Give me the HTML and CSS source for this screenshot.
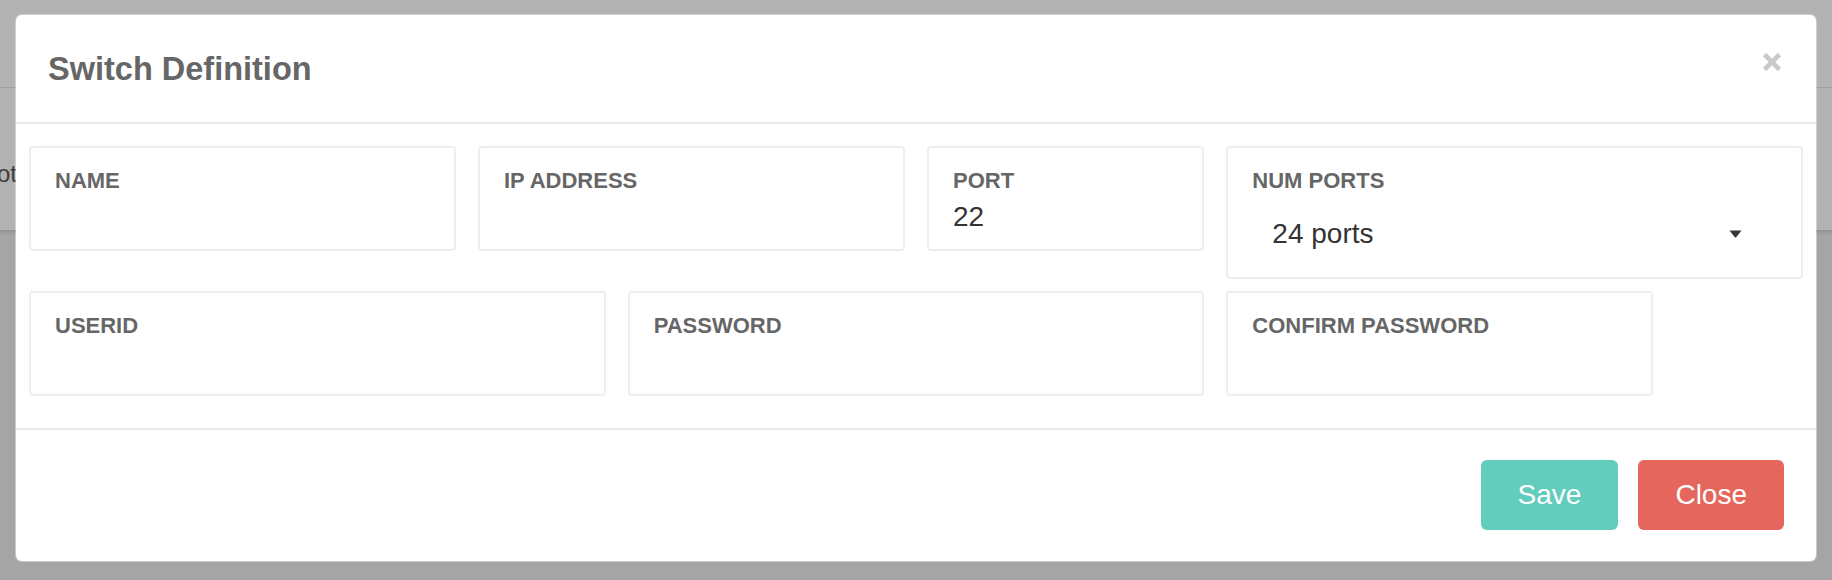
FILE: index.html
```html
<!DOCTYPE html>
<html lang="en">
<head>
<meta charset="utf-8">
<title>Switch Definition</title>
<link rel="stylesheet" href="styles.css">
</head>
<body>
  <div class="page">
    <div class="page-header"></div>
    <div class="page-panel"><span class="page-text">ot</span></div>
  </div>

  <div class="modal" role="dialog" aria-labelledby="modal-title">
    <div class="modal-header">
      <h4 class="modal-title" id="modal-title">Switch Definition</h4>
      <button class="close-btn" type="button" aria-label="Close">
        <svg width="20" height="20" viewBox="0 0 20 20" aria-hidden="true">
          <path d="M2.5 2.5 L17.5 17.5 M17.5 2.5 L2.5 17.5" stroke="#c9c9c9" stroke-width="4.6" fill="none"/>
        </svg>
      </button>
    </div>

    <div class="modal-body">
      <div class="form-grid">
        <div class="field span-3">
          <label class="field-label" for="f-name">NAME</label>
          <input class="field-input" id="f-name" type="text">
        </div>
        <div class="field span-3">
          <label class="field-label" for="f-ip">IP ADDRESS</label>
          <input class="field-input" id="f-ip" type="text">
        </div>
        <div class="field span-2">
          <label class="field-label" for="f-port">PORT</label>
          <input class="field-input" id="f-port" type="text" value="22">
        </div>
        <div class="field span-4">
          <span class="field-label">NUM PORTS</span>
          <div class="select" role="combobox" aria-expanded="false">
            <span class="select-value">24 ports</span>
            <svg class="caret" width="13" height="8" viewBox="0 0 13 8" aria-hidden="true">
              <path d="M0.5 0.5 H12.5 L7.2 7.2 Q6.5 8 5.8 7.2 Z" fill="#363636"/>
            </svg>
          </div>
        </div>

        <div class="field span-4">
          <label class="field-label" for="f-user">USERID</label>
          <input class="field-input" id="f-user" type="text">
        </div>
        <div class="field span-4">
          <label class="field-label" for="f-pass">PASSWORD</label>
          <input class="field-input" id="f-pass" type="password">
        </div>
        <div class="field span-3">
          <label class="field-label" for="f-confirm">CONFIRM PASSWORD</label>
          <input class="field-input" id="f-confirm" type="password">
        </div>
      </div>
    </div>

    <div class="modal-footer">
      <button class="btn btn-save" type="button">Save</button>
      <button class="btn btn-close" type="button">Close</button>
    </div>
  </div>
</body>
</html>
```

FILE: styles.css
```css
html, body {
  margin: 0;
  padding: 0;
}

body {
  width: 1832px;
  height: 580px;
  overflow: hidden;
  background: #a5a5a5;
  font-family: "Liberation Sans", Arial, sans-serif;
  position: relative;
}

/* page behind the backdrop */
.page-header {
  height: 87px;
  background: #b3b3b3;
  border-bottom: 1px solid #a3a3a3;
}

.page-panel {
  height: 142px;
  background: #b2b2b2;
  box-shadow: 0 2px 4px rgba(0, 0, 0, 0.14);
  overflow: hidden;
}

.page-text {
  display: block;
  margin: 72px 0 0 -3px;
  font-size: 24px;
  line-height: 28px;
  color: #3d3d3d;
}

/* modal */
.modal {
  position: absolute;
  left: 16px;
  top: 15px;
  width: 1800px;
  background: #ffffff;
  border-radius: 6px;
  box-shadow: 0 0 0 1px rgba(255, 255, 255, 0.4);
}

.modal-header {
  display: flex;
  justify-content: space-between;
  align-items: flex-start;
  padding: 36px 34px 35px 32px;
  border-bottom: 2px solid #e8e8e8;
}

.modal-title {
  margin: 0;
  font-size: 32.5px;
  line-height: 36px;
  font-weight: bold;
  color: #666666;
}

.close-btn {
  display: block;
  margin-top: 1px;
  padding: 0;
  border: 0;
  background: transparent;
  width: 20px;
  height: 20px;
  cursor: pointer;
}

.close-btn svg {
  display: block;
}

.modal-body {
  padding: 22px 13px 32px;
}

.form-grid {
  display: grid;
  grid-template-columns: repeat(12, 1fr);
  column-gap: 22px;
  row-gap: 12px;
  align-items: start;
}

.span-2 { grid-column: span 2; }
.span-3 { grid-column: span 3; }
.span-4 { grid-column: span 4; }

.field {
  border: 2px solid #eeeeee;
  border-radius: 4px;
  padding: 20px 24px 15px;
  min-width: 0;
}

.field-label {
  display: block;
  font-size: 22px;
  line-height: 26px;
  font-weight: bold;
  color: #666666;
}

.field-input {
  display: block;
  box-sizing: border-box;
  width: 100%;
  height: 34px;
  margin: 6px 0 0;
  padding: 0;
  border: 0;
  outline: none;
  background: transparent;
  font-family: "Liberation Sans", Arial, sans-serif;
  font-size: 28px;
  color: #333333;
}

.select {
  display: flex;
  align-items: center;
  justify-content: space-between;
  height: 56px;
  margin-top: 12px;
  padding: 0 35px 0 20px;
  font-size: 28px;
  line-height: 34px;
  color: #333333;
}

.caret {
  display: block;
}

.modal-footer {
  display: flex;
  justify-content: flex-end;
  gap: 20px;
  padding: 30px 32px 31px;
  border-top: 2px solid #e8e8e8;
}

.btn {
  display: flex;
  align-items: center;
  justify-content: center;
  height: 70px;
  padding: 0 37px;
  border: 0;
  border-radius: 6px;
  font-family: "Liberation Sans", Arial, sans-serif;
  font-size: 28px;
  color: #ffffff;
  cursor: pointer;
}

.btn-save {
  background: #62ccbd;
}

.btn-close {
  background: #e5665c;
}
```
